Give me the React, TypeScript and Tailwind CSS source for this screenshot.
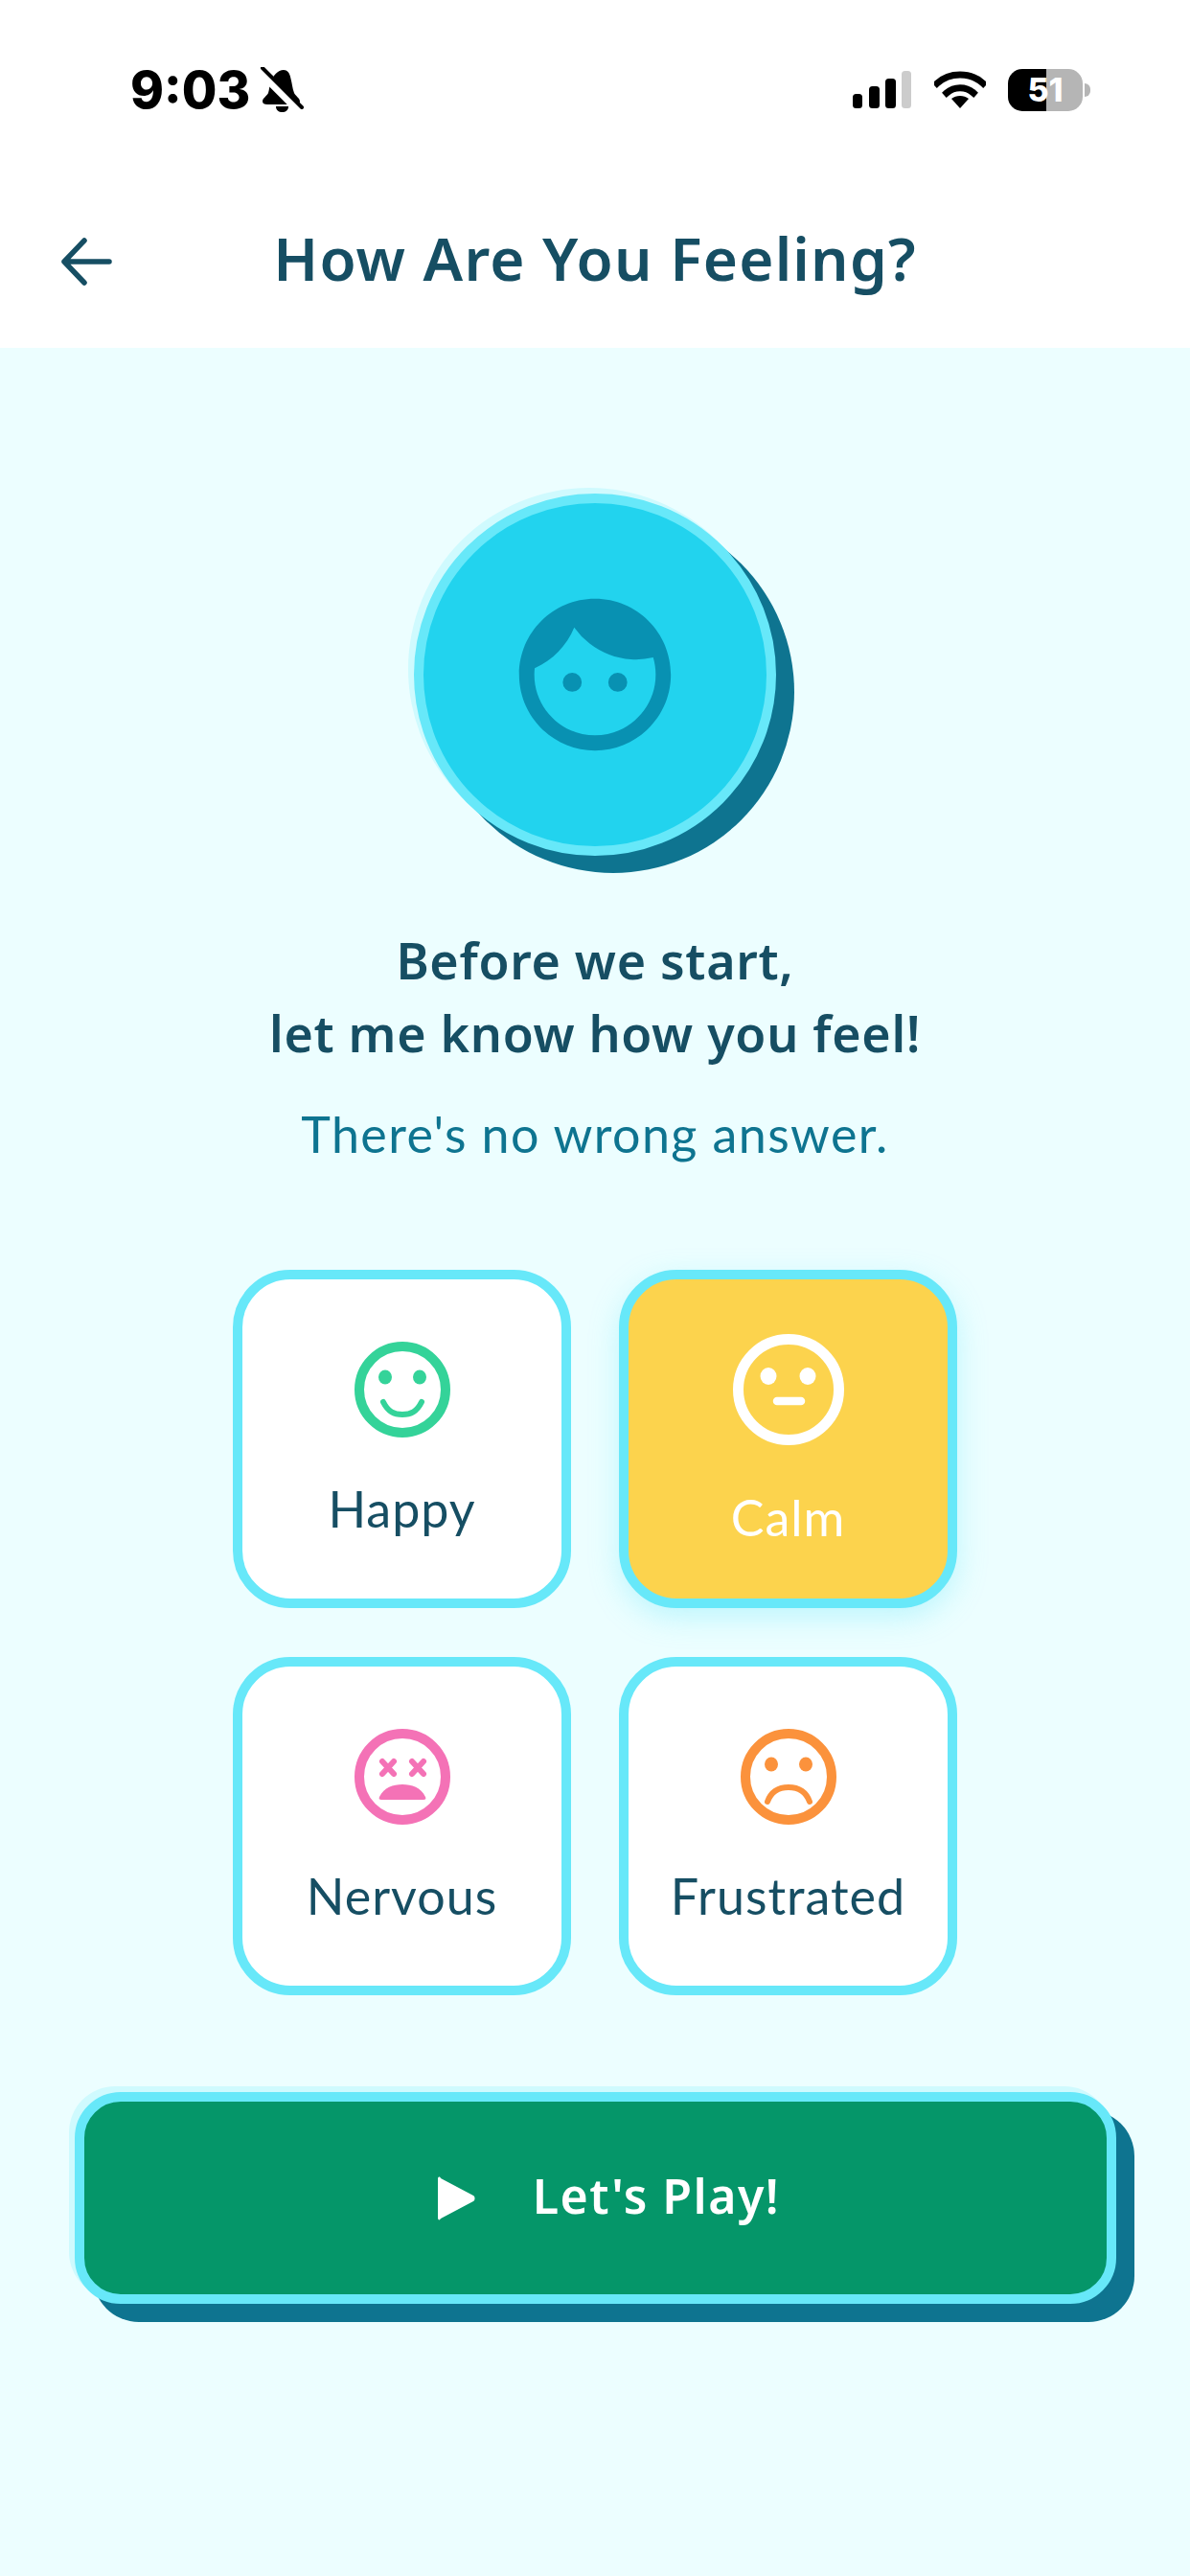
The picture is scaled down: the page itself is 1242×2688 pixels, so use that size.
import { MdFace } from 'react-icons/md';

const headingFont = "font-['Noto_Sans',sans-serif]";
const labelFont = "font-['Lato',sans-serif]";

function BellSlash() {
  return (
    <svg width="46" height="48" viewBox="0 0 46 48">
      <path
        d="M25 3c4 0 6 3 7 7 2 7 2 12 4 17 1 3 6 5 6 9 0 2-2 3-4 3H8c-3 0-5-1-5-3 0-4 5-6 6-9 1-3 1-7 3-12 2-6 7-12 13-12z"
        fill="#000"
      />
      <path d="M17 41h13c0 4-3 6-6.500 6S17 45 17 41z" fill="#000" />
      <path d="M1 5l41 41" stroke="#fff" strokeWidth="9" />
      <path d="M3 1l41 41" stroke="#000" strokeWidth="4" strokeLinecap="round" />
    </svg>
  );
}

function SignalBars() {
  return (
    <svg width="62" height="40" viewBox="0 0 62 40">
      <rect x="0" y="24" width="10" height="15" rx="3.500" fill="#000" />
      <rect x="17" y="16" width="11" height="23" rx="3.500" fill="#000" />
      <rect x="34" y="8" width="11" height="31" rx="3.500" fill="#000" />
      <rect x="51" y="0" width="10" height="39" rx="3.500" fill="#ccc" />
    </svg>
  );
}

function WifiIcon() {
  return (
    <svg width="54" height="40" viewBox="0 0 54 40">
      <path d="M3 13C16 1 38 1 51 13" fill="none" stroke="#000" strokeWidth="7" strokeLinecap="square" />
      <path d="M13 23c8-7 20-7 28 0" fill="none" stroke="#000" strokeWidth="7" strokeLinecap="square" />
      <path d="M18 29c5-4 13-4 18 0L27 39z" fill="#000" />
    </svg>
  );
}

function Battery() {
  return (
    <div className="flex items-center gap-[2px]">
      <div className="relative flex h-[44px] w-[78px] overflow-hidden rounded-[15px]">
        <div className="w-[40px] bg-black" />
        <div className="flex-1 bg-[#b5b5b5]" />
        <span className="absolute inset-0 flex items-center justify-center font-['Inter',sans-serif] text-[34px] font-extrabold leading-none text-white">
          51
        </span>
      </div>
      <div className="h-[14px] w-[6px] rounded-r-full bg-[#b5b5b5]" />
    </div>
  );
}

function HappyFace() {
  return (
    <svg width="100" height="100" viewBox="0 0 100 100">
      <circle cx="50" cy="50" r="45" fill="none" stroke="#34d399" strokeWidth="10" />
      <ellipse cx="32" cy="37" rx="7" ry="7.500" fill="#34d399" />
      <ellipse cx="68" cy="37" rx="7" ry="7.500" fill="#34d399" />
      <path d="M30 63c5 10 11 13 20 13s15-3 20-13" fill="none" stroke="#34d399" strokeWidth="6" strokeLinecap="round" />
    </svg>
  );
}

function CalmFace() {
  return (
    <svg width="116" height="116" viewBox="0 0 116 116">
      <circle cx="58" cy="58" r="52.500" fill="none" stroke="#fff" strokeWidth="11" />
      <ellipse cx="37" cy="44" rx="8.500" ry="9" fill="#fff" />
      <ellipse cx="78" cy="44" rx="8.500" ry="9" fill="#fff" />
      <path d="M46 70h25" fill="none" stroke="#fff" strokeWidth="8.500" strokeLinecap="round" />
    </svg>
  );
}

function NervousFace() {
  return (
    <svg width="100" height="100" viewBox="0 0 100 100">
      <circle cx="50" cy="50" r="45" fill="none" stroke="#f472b6" strokeWidth="10" />
      <path d="M29 34l12 13M41 34L29 47M60 34l12 13M72 34L60 47" fill="none" stroke="#f472b6" strokeWidth="6" strokeLinecap="round" />
      <path d="M28 74c-2 0-3-1-2-3 5-10 14-13 24-13s19 3 24 13c1 2 0 3-2 3z" fill="#f472b6" />
    </svg>
  );
}

function FrustratedFace() {
  return (
    <svg width="100" height="100" viewBox="0 0 100 100">
      <circle cx="50" cy="50" r="45" fill="none" stroke="#fb923c" strokeWidth="10" />
      <ellipse cx="32" cy="37" rx="7" ry="7.500" fill="#fb923c" />
      <ellipse cx="68" cy="37" rx="7" ry="7.500" fill="#fb923c" />
      <path d="M28 76c4-11 12-15 22-15s18 4 22 15" fill="none" stroke="#fb923c" strokeWidth="6" strokeLinecap="round" />
    </svg>
  );
}

function MoodCard({ label, icon }: { label: string; icon: React.ReactNode }) {
  return (
    <button className="flex h-[353px] w-[353px] flex-col items-center rounded-[60px] border-[10px] border-[#67e8f9] bg-white pt-[65px]">
      {icon}
      <span className={`${labelFont} mt-[42px] text-[52px] leading-[64px] tracking-[1px] text-[#164e63]`}>{label}</span>
    </button>
  );
}

export default function App() {
  return (
    <div className="flex min-h-[2688px] w-[1242px] flex-col bg-[#ecfeff]">
      <header className="flex h-[363px] flex-col bg-white">
        <div className="flex items-start justify-between pl-[136px] pr-[104px] pt-[70px]">
          <div className="flex items-center gap-[10px]">
            <span className="font-['Inter',sans-serif] text-[53px] font-extrabold leading-[46px] text-black">9:03</span>
            <BellSlash />
          </div>
          <div className="flex items-center gap-[23px] pt-[2px]">
            <SignalBars />
            <WifiIcon />
            <Battery />
          </div>
        </div>
        <div className="relative mt-[111px] flex items-center justify-center">
          <svg className="absolute left-[62px] top-[19px]" width="56" height="50" viewBox="0 0 56 50">
            <path d="M26 3L5 25l21 22M5 25h47" fill="none" stroke="#164e63" strokeWidth="5.500" strokeLinecap="round" strokeLinejoin="round" />
          </svg>
          <h1 className={`${headingFont} text-[62px] font-semibold leading-[80px] tracking-[1.2px] text-[#164e63]`}>How Are You Feeling?</h1>
        </div>
      </header>

      <main className="flex flex-col items-center">
        <div className="mt-[152px] flex h-[378px] w-[378px] items-center justify-center rounded-full border-[10px] border-[#67e8f9] bg-[#22d3ee] shadow-[19px_18px_0_#0e7490,-6px_-6px_0_#cffafe]">
          <MdFace className="text-[#0891b2]" size={190} />
        </div>

        <h2 className={`${headingFont} mt-[71px] text-center text-[52px] font-semibold leading-[76px] tracking-[0.7px] text-[#164e63]`}>
          Before we start,
          <br />
          let me know how you feel!
        </h2>
        <p className={`${labelFont} mt-[35px] text-[52px] leading-[64px] tracking-[1.4px] text-[#0e7490]`}>There's no wrong answer.</p>

        <div className="mt-[110px] grid grid-cols-[353px_353px] gap-x-[50px] gap-y-[51px]">
          <MoodCard label="Happy" icon={<HappyFace />} />
          <button className="flex h-[353px] w-[353px] flex-col items-center rounded-[60px] border-[10px] border-[#67e8f9] bg-[#fcd34d] pt-[57px] shadow-[0_10px_30px_rgba(103,232,249,0.35)]">
            <CalmFace />
            <span className={`${labelFont} mt-[43px] text-[52px] leading-[64px] tracking-[1px] text-white`}>Calm</span>
          </button>
          <MoodCard label="Nervous" icon={<NervousFace />} />
          <MoodCard label="Frustrated" icon={<FrustratedFace />} />
        </div>

        <button className="mt-[101px] flex h-[221px] w-[1087px] items-center justify-center gap-[60px] rounded-[48px] border-[10px] border-[#67e8f9] bg-[#059669] pl-[28px] shadow-[19px_19px_0_#0e7490,-6px_-6px_0_#cffafe]">
          <svg width="40" height="46" viewBox="0 0 40 46">
            <path d="M1 3c0-3 2-3 3-1l34 18c2 1 2 5 0 6L4 44c-1 2-3 2-3-1z" fill="#fff" />
          </svg>
          <span className={`${headingFont} mb-[5px] text-[50px] font-semibold leading-[64px] tracking-[1.5px] text-white`}>Let's Play!</span>
        </button>
      </main>
    </div>
  );
}
